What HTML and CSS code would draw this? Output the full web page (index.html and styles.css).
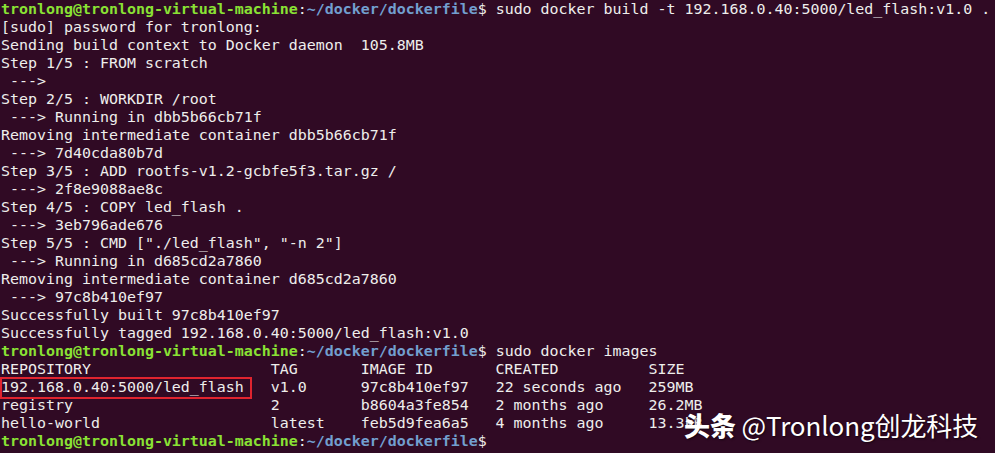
FILE: index.html
```html
<!DOCTYPE html>
<html>
<head>
<meta charset="utf-8">
<link rel="stylesheet" href="styles.css">
</head>
<body>
<div class="term">
<div class="line"><span class="user">tronlong@tronlong-virtual-machine</span>:<span class="path">~/docker/dockerfile</span>$ sudo docker build -t 192.168.0.40:5000/led_flash:v1.0 .</div>
<div class="line">[sudo] password for tronlong:</div>
<div class="line">Sending build context to Docker daemon  105.8MB</div>
<div class="line">Step 1/5 : FROM scratch</div>
<div class="line"> ---&gt;</div>
<div class="line">Step 2/5 : WORKDIR /root</div>
<div class="line"> ---&gt; Running in dbb5b66cb71f</div>
<div class="line">Removing intermediate container dbb5b66cb71f</div>
<div class="line"> ---&gt; 7d40cda80b7d</div>
<div class="line">Step 3/5 : ADD rootfs-v1.2-gcbfe5f3.tar.gz /</div>
<div class="line"> ---&gt; 2f8e9088ae8c</div>
<div class="line">Step 4/5 : COPY led_flash .</div>
<div class="line"> ---&gt; 3eb796ade676</div>
<div class="line">Step 5/5 : CMD ["./led_flash", "-n 2"]</div>
<div class="line"> ---&gt; Running in d685cd2a7860</div>
<div class="line">Removing intermediate container d685cd2a7860</div>
<div class="line"> ---&gt; 97c8b410ef97</div>
<div class="line">Successfully built 97c8b410ef97</div>
<div class="line">Successfully tagged 192.168.0.40:5000/led_flash:v1.0</div>
<div class="line"><span class="user">tronlong@tronlong-virtual-machine</span>:<span class="path">~/docker/dockerfile</span>$ sudo docker images</div>
<div class="line">REPOSITORY                    TAG       IMAGE ID       CREATED          SIZE</div>
<div class="line"><span class="boxed">192.168.0.40:5000/led_flash</span>   v1.0      97c8b410ef97   22 seconds ago   259MB</div>
<div class="line">registry                      2         b8604a3fe854   2 months ago     26.2MB</div>
<div class="line">hello-world                   latest    feb5d9fea6a5   4 months ago     13.3kB</div>
<div class="line"><span class="user">tronlong@tronlong-virtual-machine</span>:<span class="path">~/docker/dockerfile</span>$</div>
<div class="watermark"><b>头条</b> @Tronlong创龙科技</div>
</div>
</body>
</html>
```
FILE: styles.css
```css
html, body {
  margin: 0;
  padding: 0;
  background: #300a24;
  width: 995px;
  height: 453px;
  overflow: hidden;
}
.term {
  position: relative;
  padding: 0 0 0 1px;
  font-family: "DejaVu Sans Mono", monospace;
  font-size: 14.95px;
  color: #eeeeec;
}
.line {
  white-space: pre;
  height: 18px;
  line-height: 18px;
}
.user {
  color: #8ae234;
  font-weight: bold;
}
.path {
  color: #729fcf;
  font-weight: bold;
}
.boxed {
  position: relative;
}
.boxed::after {
  content: "";
  position: absolute;
  left: -1px;
  top: -1px;
  width: 248px;
  height: 18px;
  border: 2px solid #e0242f;
}
.watermark {
  position: absolute;
  left: 684px;
  top: 407px;
  font-family: "Noto Sans CJK SC", "Noto Sans", sans-serif;
  font-size: 26px;
  line-height: 36px;
  letter-spacing: -0.1px;
  color: #ffffff;
  text-shadow: 1px 1px 2px rgba(0,0,0,0.6);
  white-space: nowrap;
}
.watermark b {
  font-weight: 900;
}
```
